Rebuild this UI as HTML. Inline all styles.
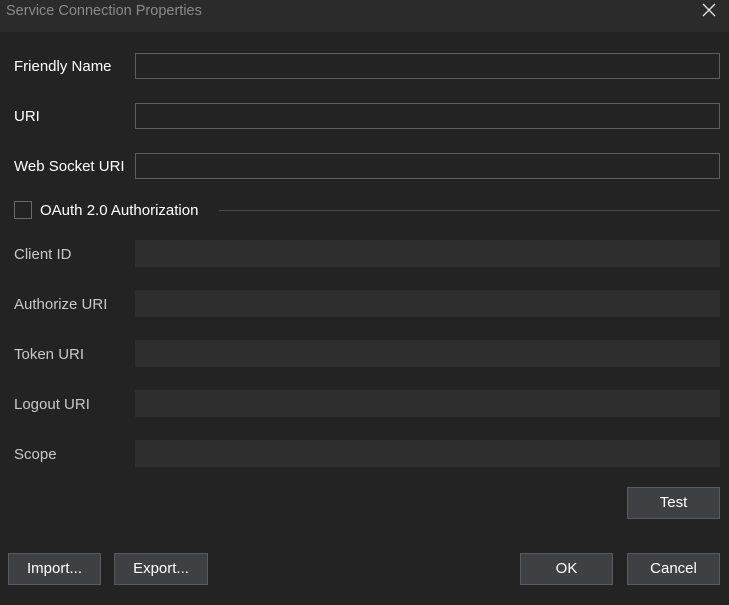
<!DOCTYPE html>
<html><head><style>
body{margin:0;width:729px;height:605px;background:#232323;font-family:"Liberation Sans",sans-serif;position:relative;overflow:hidden}
.t{position:absolute;left:0;top:0;width:729px;height:32px;background:#2b2b2b;color:#8a8a8a;font-size:14.5px;line-height:22px}
.t span{position:absolute;left:6px;top:0}
.x{position:absolute;right:12px;top:2px}
.l{position:absolute;left:14px;font-size:15px;color:#fff;line-height:18px}
.d{color:#c8c8c8}
.i{position:absolute;left:135px;width:583px;height:24px;border:1px solid #5e5e5e;background:#232323}
.g{position:absolute;left:135px;width:585px;height:27px;background:#2e2e2e}
.b{position:absolute;box-sizing:border-box;height:32px;width:93px;background:#3f4044;border:1px solid #5a5a5a;color:#fff;font-size:15px;text-align:center;line-height:30px}
</style></head><body>
<div class="t"><span>Service Connection Properties</span>
<svg class="x" width="16" height="16" viewBox="0 0 16 16"><path d="M2 2L14 14M14 2L2 14" stroke="#e0e0e0" stroke-width="1.4"/></svg></div>
<div class="l" style="top:58px">Friendly Name</div><div class="i" style="top:53px"></div>
<div class="l" style="top:108px">URI</div><div class="i" style="top:103px"></div>
<div class="l" style="top:158px">Web Socket URI</div><div class="i" style="top:153px"></div>
<div style="position:absolute;left:14px;top:201px;width:16px;height:16px;border:1px solid #6a6a6a"></div>
<div class="l" style="left:40px;top:202px">OAuth 2.0 Authorization</div>
<div style="position:absolute;left:219px;top:210px;width:501px;height:1px;background:#4a4a4a"></div>
<div class="l d" style="top:246px">Client ID</div><div class="g" style="top:240px"></div>
<div class="l d" style="top:296px">Authorize URI</div><div class="g" style="top:290px"></div>
<div class="l d" style="top:346px">Token URI</div><div class="g" style="top:340px"></div>
<div class="l d" style="top:396px">Logout URI</div><div class="g" style="top:390px"></div>
<div class="l d" style="top:446px">Scope</div><div class="g" style="top:440px"></div>
<div class="b" style="left:627px;top:487px">Test</div>
<div class="b" style="left:8px;top:553px">Import...</div>
<div class="b" style="left:114px;top:553px;width:94px">Export...</div>
<div class="b" style="left:520px;top:553px">OK</div>
<div class="b" style="left:627px;top:553px">Cancel</div>
</body></html>
